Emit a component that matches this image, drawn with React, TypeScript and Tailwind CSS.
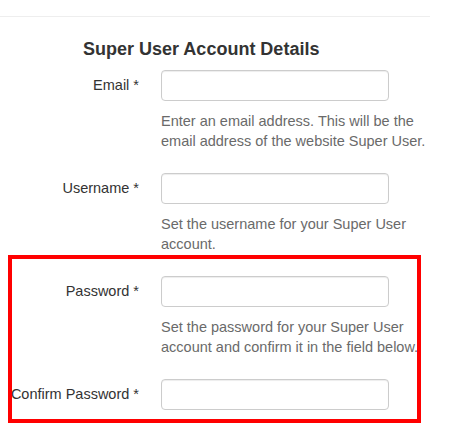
import React from "react";

type Field = {
  label: string;
  type: string;
  help?: string[];
};

const fields: Field[] = [
  {
    label: "Email *",
    type: "email",
    help: ["Enter an email address. This will be the", "email address of the website Super User."],
  },
  {
    label: "Username *",
    type: "text",
    help: ["Set the username for your Super User", "account."],
  },
  {
    label: "Password *",
    type: "password",
    help: ["Set the password for your Super User", "account and confirm it in the field below."],
  },
  { label: "Confirm Password *", type: "password" },
];

function FieldRow({ field, last }: { field: Field; last?: boolean }) {
  return (
    <div className={`grid grid-cols-[161px_280px] ${last ? "" : "mb-[22px]"}`}>
      <label className="flex h-[31px] items-center justify-end whitespace-nowrap pr-[22px] text-[14.5px] text-[#333]">
        {field.label}
      </label>
      <div>
        <input
          type={field.type}
          className="block h-[31px] w-[228px] rounded-[4px] border border-[#ccc] bg-white px-3 text-[14px] text-[#555] shadow-[inset_0_1px_1px_rgba(0,0,0,0.075)] outline-none"
        />
        {field.help && (
          <p className="mt-[10px] text-[14.5px] leading-[20px] text-[#6a6a6a]">
            {field.help.map((line) => (
              <span key={line} className="block whitespace-nowrap">
                {line}
              </span>
            ))}
          </p>
        )}
      </div>
    </div>
  );
}

export default function App() {
  return (
    <div
      className="h-[432px] w-[466px] overflow-hidden bg-white"
      style={{ fontFamily: '"Liberation Sans", Arial, sans-serif' }}
    >
      <div className="pt-[16px]">
        <div className="h-px w-[430px] bg-[#eee]" />
      </div>

      <h3 className="ml-[83px] mt-[22px] text-[18px] font-bold leading-[20px] text-[#333]">
        Super User Account Details
      </h3>

      <div className="mt-[11px]">
        <FieldRow field={fields[0]} />
        <FieldRow field={fields[1]} />

        {/* highlighted password block */}
        <div className="relative">
          <div className="pointer-events-none absolute left-[8px] top-[-21px] h-[168px] w-[413px] border-4 border-[#ff0000]" />
          <FieldRow field={fields[2]} />
          <FieldRow field={fields[3]} last />
        </div>
      </div>
    </div>
  );
}
